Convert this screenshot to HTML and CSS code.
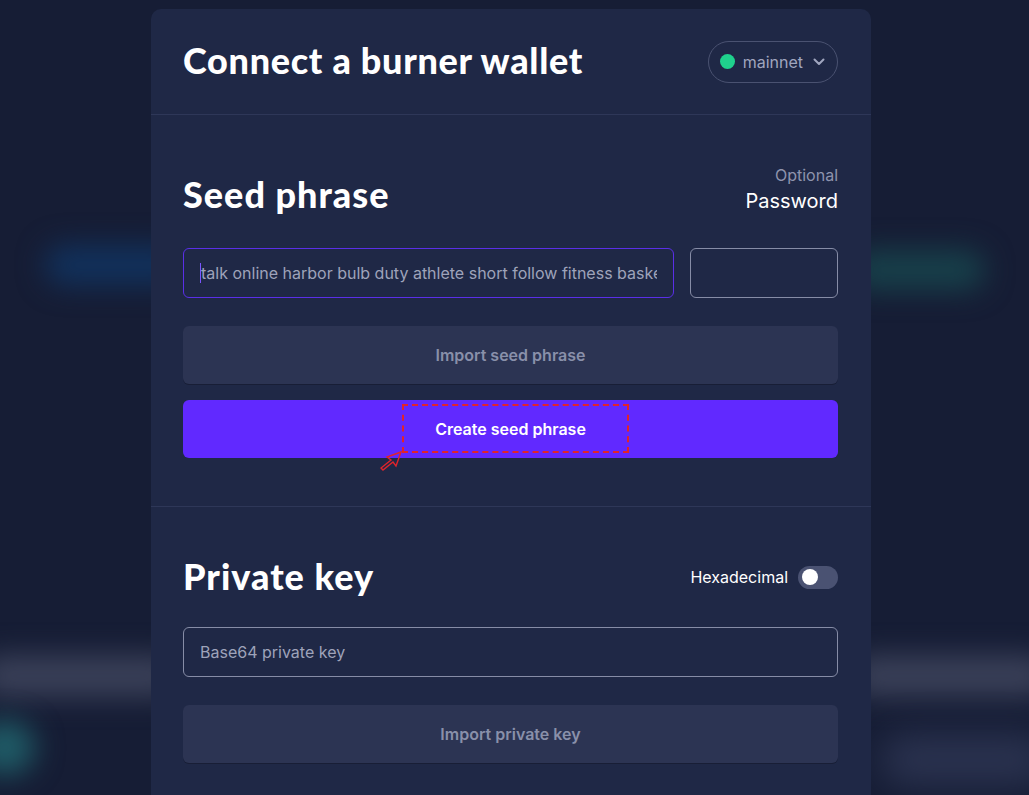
FILE: index.html
```html
<!DOCTYPE html>
<html lang="en">
<head>
<meta charset="utf-8">
<title>Connect a burner wallet</title>
<link rel="stylesheet" href="styles.css">
</head>
<body>
<div class="backdrop">
  <div class="glow glow-blue"></div>
  <div class="glow glow-green"></div>
  <div class="glow glow-bar-left"></div>
  <div class="glow glow-bar-right"></div>
  <div class="glow glow-teal"></div>
  <div class="glow glow-row-right"></div>
</div>
<main class="modal">
  <header class="modal-header">
    <h1 class="title">Connect a burner wallet</h1>
    <button class="network">
      <span class="dot"></span>
      <span class="network-name">mainnet</span>
      <svg class="chev" width="12" height="8" viewBox="0 0 12 8"><path d="M1.5 1.5 6 6l4.5-4.5" fill="none" stroke="#a0a6bf" stroke-width="2" stroke-linecap="round" stroke-linejoin="round"/></svg>
    </button>
  </header>
  <section class="section seed">
    <div class="section-head baseline">
      <h2 class="heading">Seed phrase</h2>
      <div class="pw-label">
        <span class="optional">Optional</span>
        <span class="pw">Password</span>
      </div>
    </div>
    <div class="inputs">
      <div class="field field-focus"><span class="caret"></span><span class="value">talk online harbor bulb duty athlete short follow fitness basket</span></div>
      <div class="field field-pw"></div>
    </div>
    <button class="btn btn-muted">Import seed phrase</button>
    <button class="btn btn-primary">
      <span class="highlight"></span>
      Create seed phrase
      <svg class="cursor" width="24" height="22" viewBox="0 0 24 22"><path d="M21 2 L7 7 L11 10 L1 18 L3 20 L13 12 L16 16 Z" fill="none" stroke="#e0242b" stroke-width="1.4" stroke-linejoin="miter"/></svg>
    </button>
  </section>
  <section class="section pk">
    <div class="section-head center">
      <h2 class="heading">Private key</h2>
      <div class="toggle-wrap">
        <span class="toggle-label">Hexadecimal</span>
        <span class="toggle"><span class="knob"></span></span>
      </div>
    </div>
    <div class="field field-pk"><span class="placeholder">Base64 private key</span></div>
    <button class="btn btn-muted">Import private key</button>
  </section>
</main>
</body>
</html>
```
FILE: styles.css
```css
* { box-sizing: border-box; }
html, body { margin: 0; height: 100%; }
body {
  background: #161d35;
  font-family: Inter, "Noto Sans", sans-serif;
  overflow: hidden;
  position: relative;
}
.backdrop { position: absolute; inset: 0; overflow: hidden; }
.glow { position: absolute; filter: blur(14px); border-radius: 30px; }
.glow-blue { left: 45px; top: 245px; width: 140px; height: 40px; background: #11315c; }
.glow-green { left: 850px; top: 250px; width: 135px; height: 40px; background: #17404a; }
.glow-bar-left { left: -20px; top: 655px; width: 200px; height: 42px; background: #3a4058; }
.glow-bar-right { left: 850px; top: 655px; width: 200px; height: 42px; background: #3a4058; }
.glow-teal { left: -25px; top: 720px; width: 60px; height: 55px; background: #1f5b66; border-radius: 50%; }
.glow-row-right { left: 880px; top: 735px; width: 170px; height: 50px; background: #2b3350; filter: blur(18px); }
.modal {
  position: relative;
  width: 720px;
  margin: 9px 0 0 151px;
  background: #1f2846;
  border-radius: 10px;
  min-height: 800px;
}
.modal-header {
  display: flex;
  align-items: center;
  justify-content: space-between;
  height: 106px;
  padding: 0 33px 0 32px;
  border-bottom: 1px solid #2e3758;
}
.title, .heading {
  margin: 0;
  color: #ffffff;
  font-family: Lato, sans-serif;
  font-weight: 900;
  letter-spacing: 1px;
}
.title { font-size: 36px; margin-top: -4px; letter-spacing: 0.7px; }
.network {
  display: flex;
  align-items: center;
  gap: 8px;
  height: 42px;
  padding: 0 12px 0 11px;
  border: 1px solid #4a5271;
  border-radius: 21px;
  background: transparent;
  font-family: Inter, sans-serif;
  font-size: 16px;
  color: #a0a6bf;
}
.dot { width: 15px; height: 15px; border-radius: 50%; background: #1fd18d; }
.network-name { margin-right: 2px; }
.section { padding: 0 33px 0 32px; }
.seed { padding-top: 50px; padding-bottom: 48px; border-bottom: 1px solid #2e3758; }
.section-head { display: flex; justify-content: space-between; align-items: flex-end; }
.section-head.baseline { align-items: last baseline; }
.section-head.center { align-items: center; }
.heading { font-size: 36px; line-height: 46px; }
.pw-label { display: flex; flex-direction: column; align-items: flex-end; }
.optional { color: #8e94ad; font-size: 16px; line-height: 20px; }
.pw { color: #ffffff; font-size: 20px; line-height: 28px; margin-top: 2px; }
.inputs { display: flex; gap: 16px; margin-top: 31px; }
.field {
  height: 50px;
  border: 1px solid #868ca6;
  border-radius: 6px;
  display: flex;
  align-items: center;
  padding: 0 16px;
  overflow: hidden;
  white-space: nowrap;
}
.field-focus { flex: 1; min-width: 0; border-color: #5a2fe8; }
.caret { width: 1px; height: 20px; background: #7a56ff; flex: none; }
.value { color: #9ea3ba; font-size: 16px; flex: 1; min-width: 0; overflow: hidden; }
.field-pw { width: 148px; flex: none; }
.btn {
  display: flex;
  align-items: center;
  justify-content: center;
  width: 100%;
  height: 58px;
  border: none;
  border-radius: 6px;
  font-family: Inter, sans-serif;
  font-size: 16px;
  font-weight: 600;
  position: relative;
}
.btn-muted { background: #2c3453; color: #8990aa; margin-top: 28px; box-shadow: 0 1px 0 #181e36; }
.btn-primary { background: #6129ff; color: #ffffff; margin-top: 16px; }
.highlight {
  position: absolute;
  left: 219px; top: 4px;
  width: 227px; height: 49px;
  border: 2px dashed #e0242b;
}
.cursor { position: absolute; left: 197px; top: 50px; }
.pk { padding-top: 46px; }
.toggle-wrap { display: flex; align-items: center; gap: 10px; margin-top: 2px; }
.toggle-label { color: #ffffff; font-size: 16px; }
.toggle {
  width: 40px; height: 23px;
  border-radius: 12px;
  background: #4a5272;
  display: flex; align-items: center;
  padding-left: 4px;
}
.knob { width: 16px; height: 16px; border-radius: 50%; background: #fff; }
.field-pk { margin-top: 28px; }
.placeholder { color: #9ea3ba; font-size: 16px; }
.pk .btn-muted { margin-top: 28px; }
```
